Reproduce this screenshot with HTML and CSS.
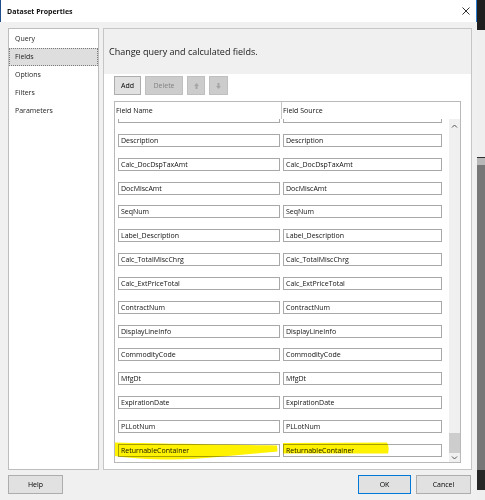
FILE: index.html
```html
<!DOCTYPE html>
<html>
<head>
<meta charset="utf-8">
<title>Dataset Properties</title>
<link rel="stylesheet" href="styles.css">
</head>
<body>
<div class="screen">
  <div class="dialog">
    <div class="titlebar">
      <span class="title">Dataset Properties</span>
      <svg class="close" width="8" height="8" viewBox="0 0 8 8"><path d="M0.5 0.5 L7.5 7.5 M7.5 0.5 L0.5 7.5" stroke="#1a1a1a" stroke-width="0.9" fill="none"/></svg>
    </div>
    <div class="body">
      <nav class="nav">
        <div class="nav-item">Query</div>
        <div class="nav-item active">Fields</div>
        <div class="nav-item">Options</div>
        <div class="nav-item">Filters</div>
        <div class="nav-item">Parameters</div>
      </nav>
      <section class="panel">
        <div class="panel-head">Change query and calculated fields.</div>
        <div class="panel-main">
          <div class="toolbar">
            <div class="btn btn-add">Add</div>
            <div class="btn btn-disabled btn-delete">Delete</div>
            <div class="btn btn-disabled btn-icon btn-up">
              <svg width="5" height="6" viewBox="0 0 5 6"><polygon points="2.5,0 5,3 3.5,3 3.5,6 1.5,6 1.5,3 0,3" fill="#a6a6a6"/></svg>
            </div>
            <div class="btn btn-disabled btn-icon btn-down">
              <svg width="5" height="6" viewBox="0 0 5 6"><polygon points="2.5,6 5,3 3.5,3 3.5,0 1.5,0 1.5,3 0,3" fill="#a6a6a6"/></svg>
            </div>
          </div>
          <div class="grid">
            <div class="grid-head">
              <div class="gh gh-name">Field Name</div>
              <div class="gh gh-source">Field Source</div>
            </div>
            <div class="grid-body">
              <div class="list-view">
                <div class="list">
                  <div class="tb"></div><div class="tb"></div>
                  <div class="tb">Description</div><div class="tb">Description</div>
                  <div class="tb">Calc_DocDspTaxAmt</div><div class="tb">Calc_DocDspTaxAmt</div>
                  <div class="tb">DocMiscAmt</div><div class="tb">DocMiscAmt</div>
                  <div class="tb">SeqNum</div><div class="tb">SeqNum</div>
                  <div class="tb">Label_Description</div><div class="tb">Label_Description</div>
                  <div class="tb">Calc_TotalMiscChrg</div><div class="tb">Calc_TotalMiscChrg</div>
                  <div class="tb">Calc_ExtPriceTotal</div><div class="tb">Calc_ExtPriceTotal</div>
                  <div class="tb">ContractNum</div><div class="tb">ContractNum</div>
                  <div class="tb">DisplayLineInfo</div><div class="tb">DisplayLineInfo</div>
                  <div class="tb">CommodityCode</div><div class="tb">CommodityCode</div>
                  <div class="tb">MfgDt</div><div class="tb">MfgDt</div>
                  <div class="tb">ExpirationDate</div><div class="tb">ExpirationDate</div>
                  <div class="tb">PLLotNum</div><div class="tb">PLLotNum</div>
                  <div class="tb">ReturnableContainer</div><div class="tb">ReturnableContainer</div>
                </div>
              </div>
              <div class="scrollbar">
                <div class="sb-btn sb-up">
                  <svg width="7" height="4" viewBox="0 0 7 4"><polyline points="1,3.5 3.5,1 6,3.5" stroke="#555" stroke-width="1" fill="none"/></svg>
                </div>
                <div class="sb-track"><div class="sb-thumb"></div></div>
                <div class="sb-btn sb-down">
                  <svg width="7" height="4" viewBox="0 0 7 4"><polyline points="1,0.5 3.5,3 6,0.5" stroke="#555" stroke-width="1" fill="none"/></svg>
                </div>
              </div>
            </div>
            <svg class="marker" width="347" height="364" viewBox="114 101 347 364">
              <path d="M115,442.5 C160,443.5 230,444.5 277,445.5 L277.5,451.5 C240,454.5 200,460 165,459.5 C140,459 122,457 115,456 Z" fill="#fff200"/>
              <path d="M283,443 L387,442.5 C389,446 389,450 388,453.5 L283,453.5 Z" fill="#fff200"/>
            </svg>
          </div>
        </div>
      </section>
    </div>
    <div class="footer">
      <div class="btn fbtn">Help</div>
      <div class="btn fbtn btn-ok">OK</div>
      <div class="btn fbtn">Cancel</div>
    </div>
  </div>
  <div class="side">
    <div class="s1"></div>
    <div class="s2"></div>
    <div class="s3"></div>
    <div class="s4"></div>
    <div class="s5"></div>
    <div class="s6"></div>
    <div class="s7"></div>
  </div>
</div>
</body>
</html>
```
FILE: styles.css
```css
* { box-sizing: border-box; }
html, body { margin: 0; padding: 0; }
body {
  font-family: "Open Sans", "Noto Sans", sans-serif;
  font-size: 7px;
  color: #000;
  background: #f0f0f0;
}
.screen {
  display: flex;
  width: 485px;
  height: 500px;
  overflow: hidden;
}
.dialog {
  width: 477px;
  height: 500px;
  background: #f0f0f0;
  display: flex;
  flex-direction: column;
  flex: none;
}
.titlebar {
  height: 22px;
  background: #fff;
  border-left: 1px solid #1f4f8a;
  border-right: 1px solid #2b7bd0;
  display: flex;
  align-items: center;
  justify-content: space-between;
  padding: 0 6px 0 6px;
}
.title {
  font-weight: 700;
  font-size: 7px;
  color: #111;
}
.close { display: block; }

.body {
  display: flex;
  gap: 4px;
  padding: 6px 0 0 8px;
  height: 448px;
}
.nav {
  width: 91px;
  height: 442px;
  background: #fff;
  border: 1px solid #bdbdbd;
  padding-top: 1px;
  display: flex;
  flex-direction: column;
}
.nav-item {
  height: 18px;
  line-height: 16px;
  padding-left: 5px;
  border: 1px solid transparent;
  color: #1e1e1e;
}
.nav-item.active {
  background: #dedede;
  border: 1px dotted #7a7a7a;
}

.panel {
  width: 369px;
  height: 442px;
  border: 1px solid #c6c6c6;
  display: flex;
  flex-direction: column;
}
.panel-head {
  height: 45px;
  flex: none;
  display: flex;
  align-items: center;
  padding-left: 5px;
  font-size: 9px;
  color: #1a1a1a;
  background: #f0f0f0;
}
.panel-main {
  flex: 1;
  background: #fff;
  padding: 2px 0 0 10px;
}
.toolbar {
  display: flex;
  gap: 4px;
  height: 19px;
}
.btn {
  height: 19px;
  border: 1px solid #adadad;
  background: #e1e1e1;
  display: flex;
  align-items: center;
  justify-content: center;
  color: #000;
}
.btn-add { width: 27px; }
.btn-disabled {
  background: #cccccc;
  border-color: #bfbfbf;
  color: #838383;
}
.btn-delete { width: 38px; }
.btn-up { width: 18px; }
.btn-down { width: 19px; }
.btn-icon svg { display: block; }

.grid {
  position: relative;
  margin-top: 6px;
  width: 347px;
  height: 362px;
  border: 1px solid #b9b9b9;
  display: flex;
  flex-direction: column;
}
.grid-head {
  height: 17px;
  flex: none;
  display: flex;
}
.gh {
  display: flex;
  align-items: center;
  padding-left: 1px;
  color: #111;
}
.gh-name { width: 166px; }
.gh-source {
  flex: 1;
  border-left: 1px solid #c8c8c8;
}
.grid-body {
  flex: 1;
  display: flex;
  min-height: 0;
}
.list-view {
  flex: 1;
  overflow: hidden;
}
.list {
  display: grid;
  grid-template-columns: 162px 159px;
  grid-auto-rows: 13px;
  column-gap: 3px;
  row-gap: 10.85px;
  padding-left: 3px;
  margin-top: -9px;
}
.tb {
  border: 1px solid #a8a8a8;
  background: #fff;
  padding-left: 2px;
  line-height: 11px;
  color: #111;
  white-space: nowrap;
  overflow: hidden;
}
.scrollbar {
  width: 11px;
  flex: none;
  background: #f0f0f0;
  display: flex;
  flex-direction: column;
}
.sb-btn {
  display: flex;
  align-items: center;
  justify-content: center;
}
.sb-btn svg { display: block; }
.sb-up { height: 14px; }
.sb-down { height: 9px; }
.sb-track {
  flex: 1;
  display: flex;
  flex-direction: column;
  justify-content: flex-end;
}
.sb-thumb {
  height: 20px;
  background: #cdcdcd;
}
.marker {
  position: absolute;
  left: -1px;
  top: -1px;
  pointer-events: none;
  mix-blend-mode: multiply;
  overflow: visible;
}

.footer {
  display: flex;
  gap: 5px;
  padding: 5px 6px 0 8px;
}
.fbtn { width: 55px; }
.btn-ok {
  width: 53px;
  margin-left: auto;
  border-color: #0078d7;
}

.side {
  width: 8px;
  flex: none;
  display: flex;
  flex-direction: column;
}
.s1 { height: 30px; background: #1f1f1f; }
.s2 { height: 127px; background: #efefef; }
.s3 { height: 1px; background: #2e2e2e; }
.s4 { height: 7px; background: #b8b8b8; }
.s5 { height: 305px; background: #777777; }
.s6 { height: 20px; background: #262626; }
.s7 { height: 10px; background: #efefef; }
```
